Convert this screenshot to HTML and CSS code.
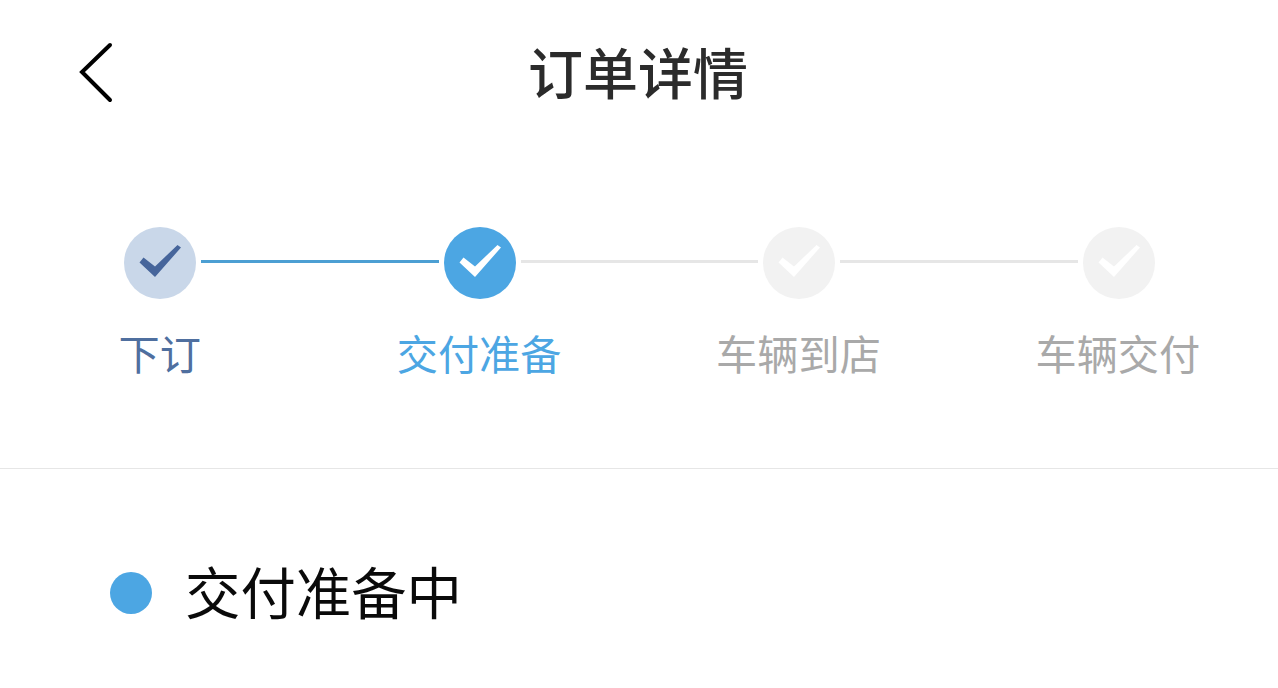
FILE: index.html
```html
<!DOCTYPE html>
<html lang="zh-CN">
<head>
  <meta charset="UTF-8" />
  <meta name="viewport" content="width=device-width, initial-scale=1.0"/>
  <title>订单详情</title>
  <link rel="stylesheet" href="styles.css">
</head>
<body>
  <header class="topbar">
    <svg class="back" width="40" height="64" viewBox="0 0 40 64">
      <path d="M31 4 L3 31 L31 59" fill="none" stroke="#000" stroke-width="4" stroke-linecap="round" stroke-linejoin="miter"/>
    </svg>
    <h1 class="title">订单详情</h1>
  </header>

  <section class="progress">
    <div class="track">
      <span class="node node-done">
        <svg width="72" height="72" viewBox="0 0 72 72"><path d="M15.5 35.5 L19.5 30.5 L31 39.5 L53.5 18 L57 20.5 L31 50 Z" fill="#46659b"/></svg>
      </span>
      <span class="line line-on"></span>
      <span class="node node-now">
        <svg width="72" height="72" viewBox="0 0 72 72"><path d="M15.5 35.5 L19.5 30.5 L31 39.5 L53.5 18 L57 20.5 L31 50 Z" fill="#fff"/></svg>
      </span>
      <span class="line"></span>
      <span class="node node-todo">
        <svg width="72" height="72" viewBox="0 0 72 72"><path d="M15.5 35.5 L19.5 30.5 L31 39.5 L53.5 18 L57 20.5 L31 50 Z" fill="#fff"/></svg>
      </span>
      <span class="line"></span>
      <span class="node node-todo">
        <svg width="72" height="72" viewBox="0 0 72 72"><path d="M15.5 35.5 L19.5 30.5 L31 39.5 L53.5 18 L57 20.5 L31 50 Z" fill="#fff"/></svg>
      </span>
    </div>
    <div class="labels">
      <div class="label label-done">下订</div>
      <div class="label label-now">交付准备</div>
      <div class="label">车辆到店</div>
      <div class="label">车辆交付</div>
    </div>
  </section>

  <section class="status">
    <span class="dot"></span>
    <span class="status-text">交付准备中</span>
  </section>
</body>
</html>
```

FILE: styles.css
```css
html, body {
  height: 100%;
}
body {
  margin: 0;
  background: #fff;
  font-family: "Noto Sans CJK SC", "Noto Sans", sans-serif;
  overflow: hidden;
}
.topbar {
  display: flex;
  align-items: center;
  height: 145px;
  padding-left: 79px;
}
.back {
  flex: none;
  margin-top: 1px;
}
.title {
  margin: 0 0 6px 409px;
  font-size: 55px;
  font-weight: 500;
  line-height: 60px;
  color: #2b2b2b;
}
.progress {
  height: 323px;
  border-bottom: 1px solid #e6e6e6;
}
.track {
  display: flex;
  align-items: flex-start;
  gap: 5px;
  padding: 82px 0 0 124px;
}
.node {
  flex: none;
  width: 72px;
  height: 72px;
  border-radius: 50%;
}
.node svg {
  display: block;
}
.node-done {
  background: #c9d7e9;
}
.node-now {
  background: #4ca6e3;
}
.node-todo {
  background: #f2f2f2;
}
.line {
  flex: none;
  width: 237.5px;
  height: 3px;
  margin-top: 33px;
  background: #e6e6e6;
}
.line-on {
  background: #4c9fd3;
}
.labels {
  display: grid;
  grid-template-columns: repeat(4, 319.4px);
  margin-top: 27px;
}
.label {
  text-align: center;
  font-size: 41.2px;
  line-height: 52px;
  color: #a9a9a9;
}
.label-done {
  color: #4f6f9f;
}
.label-now {
  color: #4ca6e3;
}
.status {
  display: flex;
  align-items: center;
  gap: 33px;
  padding: 94px 0 0 110px;
}
.dot {
  flex: none;
  width: 42px;
  height: 42px;
  border-radius: 50%;
  background: #4ca6e3;
}
.status-text {
  margin-top: -6px;
  font-size: 55.4px;
  line-height: 66px;
  color: #0a0a0a;
}
```
